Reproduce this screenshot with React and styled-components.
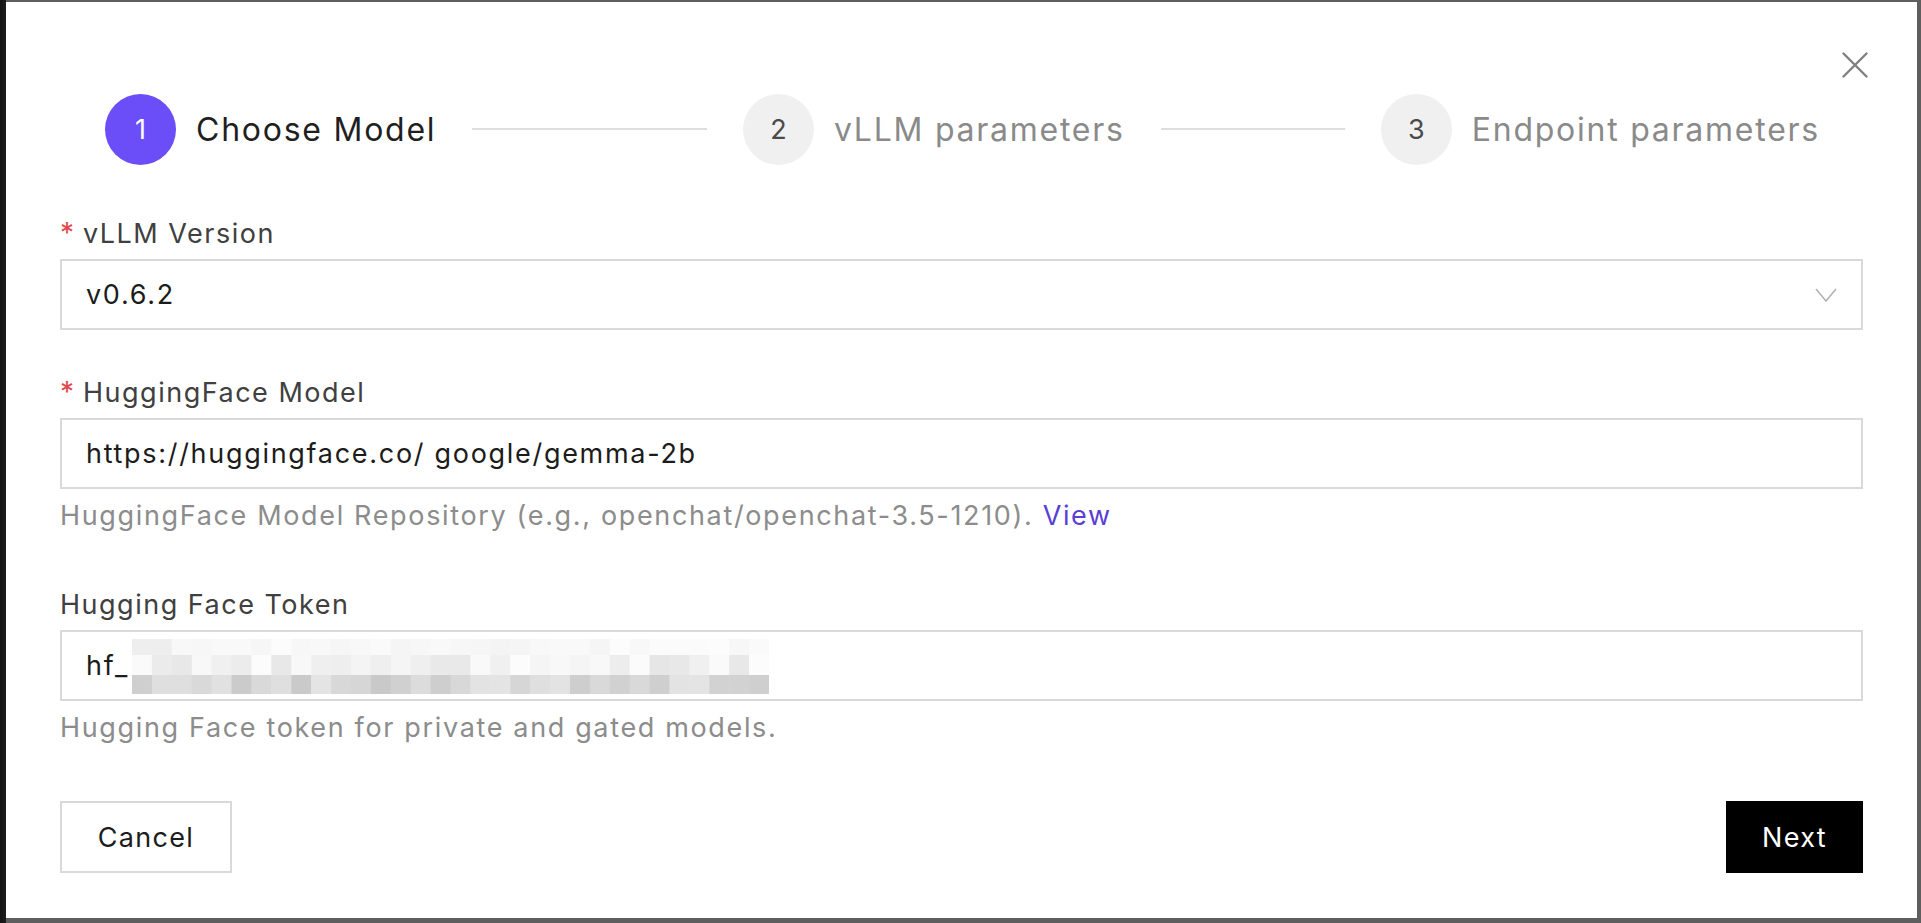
import React from "react";
import styled, { createGlobalStyle } from "styled-components";

const Global = createGlobalStyle`
  html, body { margin: 0; padding: 0; }
  body {
    font-family: "Inter", "Noto Sans", "Liberation Sans", sans-serif;
    background: #5e5e5e;
  }
  * { box-sizing: border-box; }
`;

const Page = styled.div`
  display: flex;
  height: 923px;
  padding: 2px 4px 5px 6px;
  background: linear-gradient(to right, #141414 0, #1c1c1c 6px, #5e5e5e 6px);
`;

const Modal = styled.div`
  position: relative;
  flex: 1;
  background: #ffffff;
  padding: 92px 54px 0;
  display: flex;
  flex-direction: column;
`;

const CloseButton = styled.button`
  position: absolute;
  top: 50px;
  right: 49px;
  width: 26px;
  height: 26px;
  padding: 0;
  border: 0;
  background: transparent;
  display: flex;
  cursor: pointer;
`;

const Steps = styled.div`
  display: flex;
  align-items: center;
  padding: 0 43px 0 45px;
  height: 70px;
`;

const StepItem = styled.div`
  display: flex;
  align-items: center;
  flex: ${(p) => (p.$last ? "none" : "1")};
`;

const StepCircle = styled.div`
  width: 71px;
  height: 71px;
  border-radius: 50%;
  flex: none;
  display: flex;
  align-items: center;
  justify-content: center;
  font-size: 27px;
  background: ${(p) => (p.$active ? "#6b4ef7" : "#f0f0f0")};
  color: ${(p) => (p.$active ? "#ffffff" : "#4a4a4a")};
`;

const StepTitle = styled.div`
  margin-left: 20px;
  font-size: 32px;
  letter-spacing: 1.75px;
  white-space: nowrap;
  color: ${(p) => (p.$active ? "#1f1f1f" : "#8a8a8a")};
`;

const StepTail = styled.div`
  flex: 1;
  height: 2px;
  margin: 0 36px;
  background: #dedede;
`;

const Form = styled.div`
  margin-top: 49px;
  display: flex;
  flex-direction: column;
`;

const FormItem = styled.div`
  display: flex;
  flex-direction: column;
  margin-bottom: ${(p) => p.$mb}px;
`;

const Label = styled.div`
  font-size: 27px;
  line-height: 40px;
  letter-spacing: 1.5px;
  color: #404040;
`;

const Required = styled.span`
  color: #e0474c;
  margin-right: 9px;
  font-size: 28px;
  letter-spacing: 0;
`;

const Box = styled.div`
  margin-top: 5px;
  height: 71px;
  border: 2px solid #d9d9d9;
  display: flex;
  align-items: center;
  padding: 0 24px;
  font-size: 27px;
  letter-spacing: 1.7px;
  color: #1c1c1c;
  justify-content: ${(p) => (p.$select ? "space-between" : "flex-start")};
`;

const Help = styled.div`
  margin-top: 7px;
  font-size: 27px;
  line-height: 40px;
  letter-spacing: 1.65px;
  color: #8c8c8c;
`;

const Link = styled.a`
  color: #5a3fd4;
  text-decoration: none;
`;

const Mosaic = styled.svg`
  display: block;
  flex: none;
  margin: 2px 0 0 3px;
`;

const Footer = styled.div`
  margin-top: 53px;
  display: flex;
  justify-content: space-between;
`;

const Button = styled.button`
  height: 72px;
  padding: 0;
  width: ${(p) => p.$w}px;
  font-family: inherit;
  font-size: 27px;
  letter-spacing: 1.3px;
  border: 2px solid ${(p) => (p.$primary ? "#000" : "#d9d9d9")};
  background: ${(p) => (p.$primary ? "#000" : "#fff")};
  color: ${(p) => (p.$primary ? "#fff" : "#1c1c1c")};
  cursor: pointer;
`;

function makeMosaic() {
  let seed = 1234567;
  const rand = () => {
    seed = (seed * 1103515245 + 12345) % 2147483648;
    return seed / 2147483648;
  };
  const cols = 32;
  const rows = [
    { h: 16, min: 244, max: 252 },
    { h: 20, min: 230, max: 254 },
    { h: 19, min: 200, max: 228 },
  ];
  const out = [];
  let y = 0;
  rows.forEach((r, ri) => {
    for (let c = 0; c < cols; c++) {
      let v = Math.round(r.min + rand() * (r.max - r.min));
      if (ri === 0 && c < 2) v = 238;
      out.push({ x: c * (637 / cols), y, w: 637 / cols + 0.5, h: r.h, v });
    }
    y += r.h;
  });
  return out;
}

const mosaic = makeMosaic();

const steps = ["Choose Model", "vLLM parameters", "Endpoint parameters"];

export default function App() {
  return (
    <>
      <Global />
      <Page>
        <Modal>
          <CloseButton aria-label="Close">
            <svg width="26" height="26" viewBox="0 0 26 26">
              <path d="M1.5 1.5 L24.5 24.5 M24.5 1.5 L1.5 24.5" stroke="#808080" strokeWidth="2.4" strokeLinecap="round" fill="none" />
            </svg>
          </CloseButton>
          <Steps>
            {steps.map((s, i) => (
              <StepItem key={s} $last={i === steps.length - 1}>
                <StepCircle $active={i === 0}>{i + 1}</StepCircle>
                <StepTitle $active={i === 0}>{s}</StepTitle>
                {i < steps.length - 1 && <StepTail />}
              </StepItem>
            ))}
          </Steps>
          <Form>
            <FormItem $mb={42}>
              <Label>
                <Required>*</Required>vLLM Version
              </Label>
              <Box $select>
                <span>v0.6.2</span>
                <svg width="22" height="14" viewBox="0 0 22 14">
                  <polyline points="1,1 11,13 21,1" fill="none" stroke="#b3b3b3" strokeWidth="1.6" />
                </svg>
              </Box>
            </FormItem>
            <FormItem $mb={49}>
              <Label>
                <Required>*</Required>HuggingFace Model
              </Label>
              <Box>https://huggingface.co/ google/gemma-2b</Box>
              <Help>
                HuggingFace Model Repository (e.g., openchat/openchat-3.5-1210). <Link href="#">View</Link>
              </Help>
            </FormItem>
            <FormItem $mb={0}>
              <Label>Hugging Face Token</Label>
              <Box>
                <span>hf_</span>
                <Mosaic width="637" height="55" viewBox="0 0 637 55">
                  {mosaic.map((m, i) => (
                    <rect key={i} x={m.x} y={m.y} width={m.w} height={m.h} fill={`rgb(${m.v},${m.v},${m.v})`} />
                  ))}
                </Mosaic>
              </Box>
              <Help>Hugging Face token for private and gated models.</Help>
            </FormItem>
          </Form>
          <Footer>
            <Button $w={172}>Cancel</Button>
            <Button $w={137} $primary>Next</Button>
          </Footer>
        </Modal>
      </Page>
    </>
  );
}
